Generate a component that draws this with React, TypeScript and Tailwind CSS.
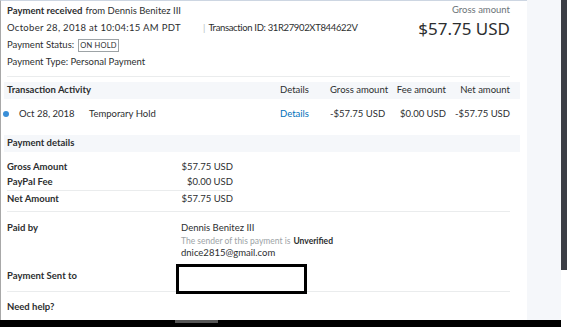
const text = 'text-[#2c2e2f]';

function Divider({ className = '' }: { className?: string }) {
  return <div className={`mx-[6px] w-[503px] border-t border-[#eaeced] ${className}`} />;
}

function SectionHead({ children }: { children: React.ReactNode }) {
  return (
    <div className="ml-[3px] w-[516px] h-[17px] bg-[#f5f7fa] flex items-center pl-[3px] font-bold whitespace-nowrap">
      {children}
    </div>
  );
}

export default function App() {
  return (
    <div
      className={`w-[567px] h-[327px] bg-white overflow-hidden flex flex-col text-[9.5px] whitespace-nowrap ${text}`}
      style={{ fontFamily: 'Lato, "Noto Sans", sans-serif' }}
    >
      <div className="flex flex-1 min-h-0">
        <div className="w-[527px] border-t border-l border-t-[#cdd6e2] border-l-[#a8a8a8] flex flex-col">
          {/* summary */}
          <div className="flex pt-[2px] px-[6px] w-[515px]">
            <div className="flex-1">
              <div className="h-[17px] flex items-center">
                <span className="font-bold">Payment received</span>
                <span className="ml-[3px]">from Dennis Benitez III</span>
              </div>
              <div className="h-[17px] flex items-center">
                <span className="w-[196px] tracking-[0.3px]">October 28, 2018 at 10:04:15 AM PDT</span>
                <span className="text-[#b6bbbe] mr-[3px]">|</span>
                <span className="tracking-[-0.35px]">Transaction ID: 31R27902XT844622V</span>
              </div>
              <div className="h-[17px] flex items-center">
                <span className="w-[71px]">Payment Status:</span>
                <span className="border border-[#9da3a6] h-[13px] w-[41px] justify-center text-[7.5px] flex items-center leading-none tracking-[0.2px]">
                  ON HOLD
                </span>
              </div>
              <div className="h-[17px] flex items-center">Payment Type: Personal Payment</div>
            </div>
            <div className="flex flex-col items-end">
              <div className="h-[15px] flex items-center text-[#6c7378]">Gross amount</div>
              <div className="text-[17px] leading-[22px]" style={{ fontFamily: '"Noto Sans", sans-serif' }}>
                $57.75 USD
              </div>
            </div>
          </div>
          <Divider className="mt-[5px]" />

          {/* transaction activity */}
          <div className="mt-[5px]">
            <SectionHead>
              <span className="w-[273px]">Transaction Activity</span>
              <span className="w-[50px] font-normal">Details</span>
              <span className="w-[54px] text-right font-normal">Gross amount</span>
              <span className="w-[62px] text-right font-normal">Fee amount</span>
              <span className="w-[64px] text-right font-normal">Net amount</span>
            </SectionHead>
          </div>
          <div className="h-[30px] flex items-center">
            <span className="ml-[2px] w-[6px] h-[6px] rounded-full bg-[#3a8fd8]" />
            <span className="ml-[10px] w-[70px]">Oct 28, 2018</span>
            <span className="w-[191px]">Temporary Hold</span>
            <span className="w-[50px] text-[#0070ba]">Details</span>
            <span className="w-[54px] text-right">-$57.75 USD</span>
            <span className="w-[62px] text-right">$0.00 USD</span>
            <span className="w-[64px] text-right">-$57.75 USD</span>
          </div>

          {/* payment details */}
          <div className="mt-[6px]">
            <SectionHead>Payment details</SectionHead>
          </div>
          <div className="mt-[7px] ml-[6px] w-[226px]">
            <div className="h-[16px] flex items-center justify-between">
              <span className="font-bold">Gross Amount</span>
              <span>$57.75 USD</span>
            </div>
            <div className="h-[16px] flex items-center justify-between border-b border-[#eaeced]">
              <span className="font-bold">PayPal Fee</span>
              <span>$0.00 USD</span>
            </div>
            <div className="h-[16px] flex items-center justify-between">
              <span className="font-bold">Net Amount</span>
              <span>$57.75 USD</span>
            </div>
          </div>
          <Divider className="mt-[4px]" />

          {/* paid by */}
          <div className="flex pt-[9px] px-[6px]">
            <div className="w-[174px] h-[14px] flex items-center font-bold">Paid by</div>
            <div>
              <div className="h-[14px] flex items-center">Dennis Benitez III</div>
              <div className="h-[12px] flex items-center text-[8.5px] text-[#9da3a6]">
                The sender of this payment is
                <span className="ml-[3px] font-bold text-[#2c2e2f]">Unverified</span>
              </div>
              <div className="h-[12px] flex items-center">dnice2815@gmail.com</div>
            </div>
          </div>
          <div className="relative h-[32px] pt-[3px] px-[6px] flex items-center font-bold">
            Payment Sent to
            <div className="absolute left-[175px] top-[5px] w-[131px] h-[30px] border-[3px] border-black bg-white" />
          </div>
          <Divider />
          <div className="h-[28px] pt-[3px] px-[6px] flex items-center font-bold">Need help?</div>
        </div>
        <div className="w-[34px] bg-[#f5f7fa]" />
        <div className="w-[6px] flex flex-col">
          <div className="h-[270px] bg-[#3b3e45]" />
          <div className="flex-1 bg-white" />
        </div>
      </div>
      <div className="h-[7px] w-[561px] bg-black flex">
        <div className="ml-[175px] w-[43px] h-[3px] bg-[#555]" />
      </div>
    </div>
  );
}
